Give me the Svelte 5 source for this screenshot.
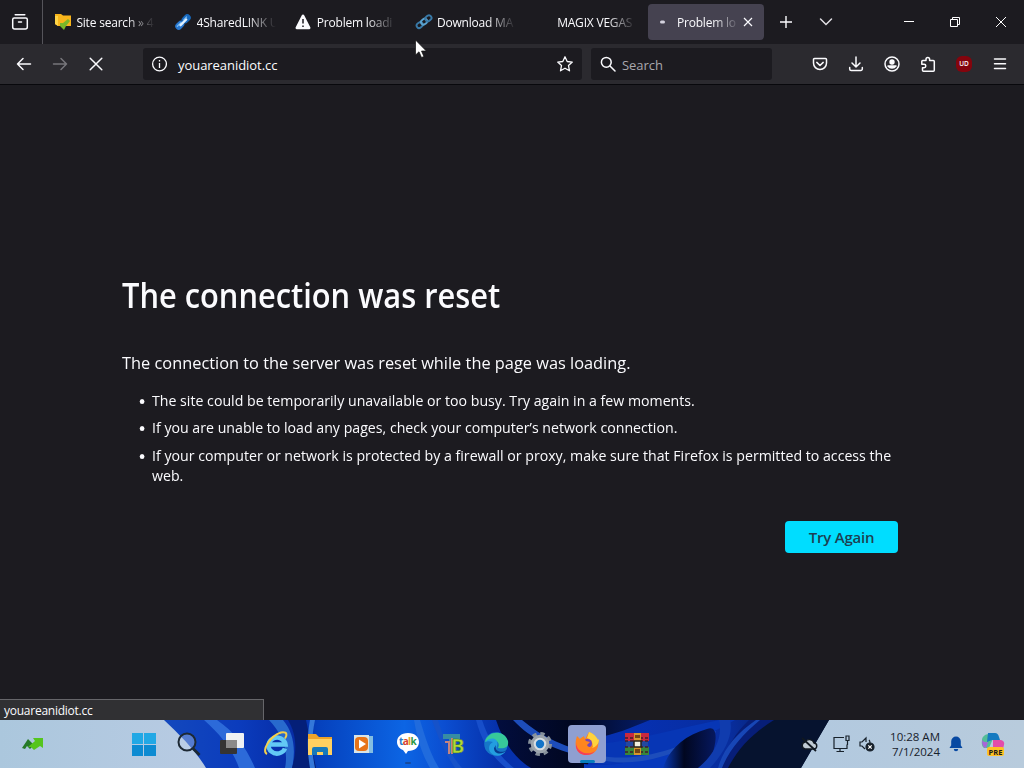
<script lang="ts">
	const tabs = [
		{ title: 'Site search » 4', icon: 'folder' },
		{ title: '4SharedLINK U', icon: 'link' },
		{ title: 'Problem loadi', icon: 'warning' },
		{ title: 'Download MA', icon: 'chain' },
		{ title: 'MAGIX VEGAS', icon: '' },
		{ title: 'Problem lo', icon: 'busy', active: true }
	];

	const apps = ['start', 'search', 'taskview', 'ie', 'explorer', 'media', 'talk', 'tb', 'edge', 'settings', 'firefox', 'winrar'];
</script>

<div class="screen">
	<div class="tabbar">
		<div class="recent">
			<svg width="18" height="18" viewBox="0 0 18 18" fill="none" stroke="#fbfbfe" stroke-width="1.5" stroke-linecap="round">
				<path d="M4.2 1.8h9.6M3.2 5h11.6a1.5 1.5 0 0 1 1.5 1.5V14a2 2 0 0 1-2 2H3.7a2 2 0 0 1-2-2V6.5A1.5 1.5 0 0 1 3.2 5zM7.5 9h3" />
			</svg>
		</div>
		<div class="tabs">
			{#each tabs as tab}
				<div class="tab" class:active={tab.active}>
					<svg class="favicon" width="18" height="18" viewBox="0 0 18 18">
						{#if tab.icon === 'folder'}
							<path d="M1 1h6l2 1.500h8V13H4l-3-2z" fill="#f8b51b" />
							<path d="M1 3h3v10l-3-2z" fill="#ffd447" />
							<path d="M6 10h3l5-4 2 2-4 5-2 4-4-4z" fill="#79b829" />
						{:else if tab.icon === 'link'}
							<g transform="rotate(-45 9 9)">
								<rect x="-.5" y="5.500" width="10" height="7" rx="3.500" fill="#2878d0" />
								<rect x="8.500" y="5.500" width="10" height="7" rx="3.500" fill="#1769bd" />
								<path d="M2 8h5M11 8h4" stroke="#75b8f2" stroke-width="1.300" stroke-linecap="round" />
								<path d="M5 9.500h8" stroke="#e0f1ff" stroke-width="2.400" stroke-linecap="round" />
							</g>
						{:else if tab.icon === 'warning'}
							<path d="M9 1.500a1.300 1.300 0 0 0-1.200.7L1.700 14.200a1.300 1.300 0 0 0 1.200 2h12.200a1.300 1.300 0 0 0 1.200-2L10.200 2.200A1.300 1.300 0 0 0 9 1.500z" fill="#fbfbfe" />
							<path d="M9 6v4.500M9 12.600v1.300" stroke="#1c1b22" stroke-width="1.500" />
						{:else if tab.icon === 'chain'}
							<g transform="rotate(-38 9 9)" fill="none" stroke="#397aa8" stroke-width="1.900">
								<rect x=".5" y="6.300" width="6.500" height="5" rx="2.500" />
								<rect x="6" y="6.300" width="6.500" height="5" rx="2.500" stroke="#5ba3cf" />
								<rect x="11.500" y="6.300" width="6.500" height="5" rx="2.500" />
							</g>
						{:else if tab.icon === 'busy'}
							<rect x="5" y="7.500" width="5" height="3" rx="1.500" fill="#d4d2de" />
						{/if}
					</svg>
					<span class="title">{tab.title}</span>
					{#if tab.active}
						<svg class="close" width="10" height="10" viewBox="0 0 10 10"><path d="M1 1l8 8M9 1L1 9" stroke="#fbfbfe" stroke-width="1.200" /></svg>
					{/if}
				</div>
			{/each}
		</div>
		<div class="tabtools">
			<svg width="14" height="14" viewBox="0 0 14 14"><path d="M7 1v12M1 7h12" stroke="#fbfbfe" stroke-width="1.400" /></svg>
			<svg width="14" height="14" viewBox="0 0 14 14" fill="none"><path d="M1.500 4L7 9.500 12.500 4" stroke="#e2e1e6" stroke-width="1.500" stroke-linecap="round" /></svg>
		</div>
		<div class="window-buttons">
			<svg width="12" height="12" viewBox="0 0 12 12"><path d="M1 5.500h10" stroke="#fff" /></svg>
			<svg width="12" height="12" viewBox="0 0 12 12" fill="none" stroke="#fff"><path d="M1.500 3.500h7v7h-7zM3.500 3.500v-2h7v7h-2" /></svg>
			<svg width="12" height="12" viewBox="0 0 12 12"><path d="M1 1l10 10M11 1L1 11" stroke="#fff" /></svg>
		</div>
	</div>

	<div class="toolbar">
		<div class="nav">
			<svg width="16" height="16" viewBox="0 0 16 16"><path d="M14.500 8H1.500M7 2.500L1.500 8 7 13.500" /></svg>
			<svg class="disabled" width="16" height="16" viewBox="0 0 16 16"><path d="M1.500 8h13M9 2.500L14.500 8 9 13.500" /></svg>
			<svg width="16" height="16" viewBox="0 0 16 16"><path d="M2.200 2.200l11.600 11.600M13.800 2.200L2.200 13.800" /></svg>
		</div>
		<div class="urlbar">
			<svg width="16" height="16" viewBox="0 0 16 16" fill="none" stroke="#fbfbfe" stroke-width="1.300"><circle cx="8.500" cy="8" r="6.900" /><path d="M8.500 7v5M8.500 4v1.500" /></svg>
			<span class="url">youareanidiot.cc</span>
			<svg width="18" height="18" viewBox="0 0 18 18" fill="none" stroke="#fbfbfe" stroke-width="1.300" stroke-linejoin="round"><path d="M9 1.800l2.200 4.700 5.100.6-3.800 3.500 1 5.200L9 13.200l-4.500 2.600 1-5.200-3.800-3.500 5.100-.6z" /></svg>
		</div>
		<div class="searchbar">
			<svg width="16" height="16" viewBox="0 0 16 16" fill="none" stroke="#fbfbfe" stroke-width="1.500" stroke-linecap="round"><circle cx="6.300" cy="6.300" r="4.900" /><path d="M10 10l5 5" /></svg>
			<span>Search</span>
		</div>
		<div class="actions">
			<svg width="16" height="16" viewBox="0 0 16 16"><path d="M2.500 2.500h11a1 1 0 0 1 1 1V7a6.500 6.500 0 0 1-13 0V3.500a1 1 0 0 1 1-1zM4.800 6.400L8 9.500l3.200-3.100" /></svg>
			<svg width="16" height="16" viewBox="0 0 16 16"><path d="M8 1v10M4 7l4 4 4-4M1.700 11.500V13a1.500 1.500 0 0 0 1.500 1.500h9.600a1.500 1.500 0 0 0 1.500-1.500v-1.500" /></svg>
			<svg width="16" height="16" viewBox="0 0 16 16"><circle cx="8" cy="8" r="7" /><circle cx="8" cy="6" r="2.700" fill="#fbfbfe" stroke="none" /><path d="M4 10h8a5 5 0 0 1-8 0z" fill="#fbfbfe" /></svg>
			<svg width="16" height="16" viewBox="0 0 16 16"><path d="M6 4.500V3.200a1.800 1.800 0 0 1 3.600 0v1.300h3.700a1 1 0 0 1 1 1v8.700a1 1 0 0 1-1 1H3.500a1 1 0 0 1-1-1v-2.500h1.600a1.700 1.700 0 0 0 0-3.400H1.800V5.500a1 1 0 0 1 1-1z" /></svg>
			<span class="ublock">UD</span>
			<svg width="16" height="16" viewBox="0 0 16 16"><path d="M2.500 3h11M2.500 7.800h11M2.500 12.500h11" /></svg>
		</div>
	</div>

	<main>
		<h1>The connection was reset</h1>
		<p>The connection to the server was reset while the page was loading.</p>
		<ul>
			<li>The site could be temporarily unavailable or too busy. Try again in a few moments.</li>
			<li>If you are unable to load any pages, check your computer’s network connection.</li>
			<li>If your computer or network is protected by a firewall or proxy, make sure that Firefox is permitted to access the<br />web.</li>
		</ul>
		<div class="button-row">
			<button>Try Again</button>
		</div>
	</main>

	<div class="status">youareanidiot.cc</div>

	<div class="taskbar">
		<svg class="wallpaper" width="1024" height="48" viewBox="0 0 1024 48">
			<defs>
				<linearGradient id="sky"><stop offset="0" stop-color="#abc7dd" /><stop offset=".2" stop-color="#b8cbe3" /><stop offset=".8" stop-color="#b2c9df" /><stop offset="1" stop-color="#b8cbdc" /></linearGradient>
				<linearGradient id="bloom" x1="165" x2="830" y1="0" y2="0" gradientUnits="userSpaceOnUse">
					<stop offset="0" stop-color="#1348bd" /><stop offset=".11" stop-color="#0b3cbd" /><stop offset=".2" stop-color="#062ba4" /><stop offset=".23" stop-color="#0541bd" /><stop offset=".36" stop-color="#0c65e4" /><stop offset=".42" stop-color="#0b4ed1" /><stop offset=".5" stop-color="#0631ab" /><stop offset=".7" stop-color="#0630b2" /><stop offset=".85" stop-color="#082d9d" /><stop offset="1" stop-color="#061535" />
				</linearGradient>
				<linearGradient id="shade"><stop offset="0" stop-color="#020d3e" /><stop offset=".5" stop-color="#010720" /><stop offset="1" stop-color="#051c68" /></linearGradient>
				<linearGradient id="fold"><stop offset="0" stop-color="#0838b4" /><stop offset=".4" stop-color="#010720" /><stop offset="1" stop-color="#06185e" /></linearGradient>
			</defs>
			<path d="M0 0h1024v48H0z" fill="url(#sky)" />
			<path d="M164 0h665l-28 48H206C196 31 180 15 164 0z" fill="url(#bloom)" />
			<path d="M204 0h13c19 13 30 29 38 48h-16C233 30 219 13 204 0z" fill="#2c6ad9" />
			<path d="M269 0h14c11 13 13 30 9 48h-7C289 28 281 13 269 0z" fill="#286acd" />
			<path d="M288 0h18l10 48h-24C297 31 297 15 288 0z" fill="#041f78" />
			<path d="M310 0h5c-4 18-3 33 0 48h-5c-3-18-3-32 0-48z" fill="#3478d9" />
			<path d="M414 0h6c6 20 11 35 19 48h-9C421 32 417 18 414 0z" fill="#206bdd" />
			<path d="M432 0h6c6 20 13 36 24 48h-7C445 33 438 18 432 0z" fill="#1652c9" />
			<path d="M476 0h6c7 21 17 36 32 48h-8C491 36 481 20 476 0z" fill="#174eca" />
			<path d="M496 0h154c-20 8-36 15-55 18l-8 30h-56C514 38 503 21 496 0z" fill="url(#shade)" />
			<path d="M598 24C638 20 680 8 719 0h16c-42 23-86 46-137 44z" fill="#0736b5" />
			<path d="M584 44c39 5 83-10 127-30 2 15-2 26-10 34h-117z" fill="#0739bd" />
			<path d="M513 0h9c20 17 44 28 75 35 40 9 81-7 119-24l-2 4c-52 27-88 32-117 24C554 32 530 18 513 0z" fill="#1d4dbb" />
			<path d="M663 48c6-19 22-33 44-39 11-5 12 13 0 39z" fill="url(#fold)" />
			<path d="M719 0h11c4 16-7 34-20 48h-12c17-14 25-31 21-48z" fill="#103cae" />
			<path d="M749 0h30c-17 15-31 29-39 48h-22c9-19 16-34 31-48z" fill="#071e78" />
			<path d="M774 0h55l-28 48h-73c10-20 25-35 46-48z" fill="#06132f" />
			<path d="M756 0h4c-17 14-31 30-38 48h-4c5-19 19-35 38-48z" fill="#1746b6" />
		</svg>
		<svg class="widget" width="24" height="18" viewBox="0 0 24 18">
			<path d="M2 13l6-9 6 6-4 4-3-3-2 3z" fill="#267a28" />
			<path d="M8 12l7-6-2-3h10v10l-3-2-6 4-3-3z" fill="#55c51d" />
		</svg>
		<div class="apps">
			{#each apps as app}
				<div class="app {app}">
					<svg width="28" height="28" viewBox="0 0 28 28">
						{#if app === 'start'}
							<path d="M2 3h11v11H2zM14 3h12v11H14z" fill="#22a8e5" /><path d="M2 15h11v11H2zM14 15h12v11H14z" fill="#0d8bd2" />
						{:else if app === 'search'}
							<circle cx="13" cy="12" r="8.500" fill="#bdd1ed" fill-opacity=".4" stroke="#1d2934" stroke-width="2" /><path d="M19 18.500l6.500 6.500" stroke="#1d2934" stroke-width="2.800" />
						{:else if app === 'taskview'}
							<rect x="2" y="10" width="17" height="14" rx="1" fill="#353433" /><rect x="8" y="3" width="18" height="15" rx="1" fill="#eef1f3" /><path d="M8 10h11v8H8z" fill="#8b8a89" />
						{:else if app === 'ie'}
							<path d="M23 18.500a8.500 8 0 1 1 .5-4H8" fill="none" stroke="#63c9f5" stroke-width="4.500" /><path d="M5 24C-1 21 8 6 19 2.500c7-1 6 3 4 6" fill="none" stroke="#f4cf4b" stroke-width="2" />
						{:else if app === 'explorer'}
							<path d="M2 4h8l3 3h13v18H2z" fill="#eda329" /><path d="M2 9h24v16H2z" fill="#ffd060" /><path d="M6 25v-6q0-2 2-2h12q2 0 2 2v6h-5v-3h-6v3z" fill="#1779bb" />
						{:else if app === 'media'}
							<path d="M6 6h17v17H6z" fill="#84bee2" /><path d="M4 5h15v18H4z" fill="#d9e4e7" /><rect x="5" y="7" width="13" height="14" rx="4" fill="#e77419" /><path d="M9 9.500l7 4.500-7 4.500z" fill="#fff" />
						{:else if app === 'talk'}
							<path d="M14 3C7 3 3 7 3 12c0 4 3 7 6 8l3 4 2-3c7 0 11-4 11-9s-4-9-11-9z" fill="#fff" /><text x="13.500" y="15" text-anchor="middle" font-size="10" font-weight="700" letter-spacing="-.7"><tspan fill="#247bcf">t</tspan><tspan fill="#d8402f">a</tspan><tspan fill="#e7a520">l</tspan><tspan fill="#299947">k</tspan></text>
						{:else if app === 'tb'}
							<path d="M5 4h17v5h-6v14h-5V9H5z" fill="#378ca3" /><path d="M7 12h4v12M14 24V8" stroke="#c58480" stroke-width="2" fill="none" /><text x="13" y="23" font-size="20" font-weight="700" fill="#b0d936" stroke="#34732e" stroke-width=".6">B</text>
						{:else if app === 'edge'}
							<circle cx="14" cy="14" r="11.800" fill="#1677c8" /><path d="M3 12C5 1 22-1 26 11c1 6-3 8-10 7 3-6-3-11-13-6z" fill="#37c99a" /><path d="M3 12c8-7 14-2 12 4-3 6 4 9 9 5-5 8-17 5-17-3 0-3 2-5 4-6-3-1-6-1-8 0z" fill="#239ee0" /><path d="M14 15c-2 6 5 9 11 5-4 5-13 5-13-2z" fill="#073b90" />
						{:else if app === 'settings'}
							<circle cx="14" cy="14" r="10" fill="none" stroke="#86909b" stroke-width="4" stroke-dasharray="4.200 3.654" /><circle cx="14" cy="14" r="7.800" fill="#d8dde1" stroke="#9ba4ac" stroke-width="3" /><circle cx="14" cy="14" r="4.200" fill="#1374c8" />
						{:else if app === 'firefox'}
							<path d="M4 6l3 3 4-3 1 3 4-7c5 2 7 5 8 8l1-1c2 9-3 16-11 16C5 25 0 18 4 6z" fill="#ff8420" /><path d="M16 2c4 1 8 5 9 8l1-1c0 5-3 8-7 9 2-5-1-9-5-10z" fill="#ffd33d" /><path d="M3 12c0 11 13 14 19 9-4 6-17 6-19-4z" fill="#f53d5c" /><circle cx="14.500" cy="13.500" r="4.500" fill="#7446ba" /><path d="M9 14c-3-3-2-6 1-7l3 4 4 1-3 3c1 3 5 2 6 0 0 6-9 7-11-1z" fill="#ff861d" />
						{:else}
							<path d="M2 3h24v8H2z" fill="#c9293f" /><path d="M3 11h22v6H3z" fill="#23489f" /><path d="M2 17h24v8H2z" fill="#38853b" /><path d="M2 8h24M2 11h24M2 17h24M2 22h24" stroke="#421d2c" stroke-width="1.500" stroke-dasharray="3 2" /><path d="M11 3h7v22h-7z" fill="#d7962d" /><path d="M12 5h5v3h-5zM12 19h5v4h-5z" fill="#744616" /><path d="M11 11h7v6h-7z" fill="#f2efde" stroke="#272018" stroke-width="1.500" />
						{/if}
					</svg>
				</div>
			{/each}
		</div>
		<div class="tray">
			<svg class="cloud" width="18" height="18" viewBox="0 0 18 18"><path d="M5 14h8.500a3 3 0 0 0 .5-6 5 5 0 0 0-9-1 3.600 3.600 0 0 0 0 7z" fill="#c0cbd4" stroke="#101820" stroke-width="1.400" /><path d="M2 3l14 13" stroke="#101820" stroke-width="1.800" /></svg>
			<svg width="18" height="18" viewBox="0 0 18 18" fill="none" stroke="#17212b" stroke-width="1.200"><path d="M12 2.500H2v11h13v-4M8 13.500v3M4.500 16.500H12M14 1h3v4.500h-3zM15.500 5.500V10" /></svg>
			<svg width="18" height="18" viewBox="0 0 18 18" fill="none" stroke="#17212b" stroke-width="1.200"><path d="M7 14L4 11H2V7h2l4-4v4M11 5q1 1 1 3" /><circle cx="12" cy="12" r="4" fill="#17212b" /><path d="M10.300 10.300l3.400 3.400M13.700 10.300l-3.400 3.400" stroke="#fff" /></svg>
			<div class="clock"><span>10:28 AM</span><span>7/1/2024</span></div>
			<svg class="bell" width="16" height="18" viewBox="0 0 16 18"><path d="M8 1.500a4.800 4.800 0 0 0-4.800 4.800v4L1.500 13h13l-1.700-2.700v-4A4.800 4.800 0 0 0 8 1.500zM5.800 14h4.400A2.200 2.200 0 0 1 5.800 14z" fill="#0749a2" /></svg>
			<svg class="copilot" width="26" height="26" viewBox="0 0 26 26">
				<path d="M2 9c0-3 3-6 7-6h6L9 17H4q-3-2-2-8z" fill="#53bd97" /><path d="M8 2h7q3 0 4 4l1 3h-8l-5 2z" fill="#167ac0" /><path d="M13 9h8q4 1 3 5l-2 7h-9z" fill="#e34da9" /><path d="M2 9q2 3 6 2l-2 6q-4 0-4-8z" fill="#a866d8" />
				<rect x="7" y="16" width="17" height="9" rx="2" fill="#ffc123" /><text x="15.500" y="23.500" text-anchor="middle" font-size="7.500" font-weight="700" fill="#191919">PRE</text>
			</svg>
		</div>
	</div>

	<svg class="cursor" width="14" height="20" viewBox="0 0 14 20"><path d="M1.500 1v15l3.500-3.200L7.500 18.500l2.400-1-2.400-5.500h4.800z" fill="#fff" stroke="#111" stroke-width=".7" /></svg>
</div>

<style>
	:global(body) {
		margin: 0;
		background: #1c1b20;
	}

	.screen {
		position: relative;
		display: flex;
		flex-direction: column;
		width: 1024px;
		height: 768px;
		overflow: hidden;
		color: #fbfbfe;
		background: #1c1b20;
		font-family: 'Open Sans', 'Noto Sans', sans-serif;
	}

	svg {
		display: block;
		flex: none;
	}

	.tabbar {
		display: flex;
		height: 44px;
		flex: none;
	}

	.recent {
		box-sizing: border-box;
		width: 43px;
		padding: 13px 0 0 11px;
		border-right: 1px solid #55545a;
	}

	.tabs {
		display: flex;
		padding-left: 2px;
	}

	.tab {
		box-sizing: border-box;
		display: flex;
		align-items: center;
		width: 116.2px;
		height: 36px;
		margin: 4px 2px;
		padding: 0 7px;
		border-radius: 4px;
	}

	.tab.active {
		background: #454250;
	}

	.title {
		width: 79px;
		margin-left: 4.4px;
		white-space: nowrap;
		font-size: 12px;
		letter-spacing: -0.2px;
		mask-image: linear-gradient(to right, #000 50px, transparent 79px);
	}

	.active .title {
		width: 61.6px;
		margin-left: 4px;
		mask-image: linear-gradient(to right, #000 36px, transparent 63px);
	}

	.close {
		margin-left: 4.4px;
	}

	.tabtools {
		display: flex;
		align-items: center;
		gap: 26px;
		margin-left: 13px;
	}

	.window-buttons {
		display: flex;
		align-items: center;
		gap: 34px;
		margin-left: auto;
		padding-right: 17px;
	}

	.toolbar {
		box-sizing: border-box;
		display: flex;
		align-items: center;
		height: 41px;
		flex: none;
		background: #2b2a2f;
		border-bottom: 1px solid #08080c;
	}

	.nav {
		display: flex;
		gap: 20px;
		width: 127px;
		padding-left: 16px;
	}

	.nav svg,
	.actions svg {
		fill: none;
		stroke: #fbfbfe;
		stroke-width: 1.5;
		stroke-linecap: round;
		stroke-linejoin: round;
	}

	.nav .disabled {
		stroke: #77767b;
	}

	.urlbar,
	.searchbar {
		box-sizing: border-box;
		display: flex;
		align-items: center;
		height: 32px;
		background: #1c1b20;
		border-radius: 3px;
		font-size: 13px;
	}

	.urlbar {
		width: 439px;
		padding: 0 8px;
	}

	.urlbar span,
	.searchbar span {
		padding-top: 1px;
		letter-spacing: -0.05px;
	}

	.url {
		flex: 1;
		margin-left: 11px;
	}

	.searchbar {
		width: 181px;
		margin-left: 9px;
		padding-left: 9px;
		gap: 6px;
		color: #a9a8ae;
	}

	.actions {
		display: flex;
		align-items: center;
		gap: 20px;
		margin-left: auto;
		padding-right: 16px;
	}

	.ublock {
		width: 16px;
		height: 16px;
		border-radius: 6px;
		background: #84040d;
		font-size: 6.5px;
		font-weight: 600;
		line-height: 15px;
		text-align: center;
	}

	main {
		width: 776px;
		flex: 1;
		padding: 186px 126px 0 122px;
	}

	h1,
	p,
	li {
		transform-origin: left;
		white-space: nowrap;
	}

	h1 {
		margin: 0;
		font-size: 34px;
		font-weight: 600;
		line-height: 48px;
		transform: scaleX(0.906);
	}

	p {
		margin: 31px 0 0;
		font-size: 17px;
		line-height: 26px;
		transform: scaleX(0.962);
	}

	ul {
		margin: 14px 0 0;
		padding-left: 30px;
		list-style: none;
		font-size: 15px;
		line-height: 20px;
	}

	li {
		position: relative;
		margin-bottom: 7.4px;
		transform: scaleX(0.944);
	}

	li::before {
		content: '';
		position: absolute;
		top: 9px;
		left: -13px;
		width: 5px;
		height: 5px;
		border-radius: 50%;
		background: #fbfbfe;
	}

	.button-row {
		display: flex;
		justify-content: flex-end;
		margin-top: 36px;
	}

	button {
		width: 113px;
		height: 32px;
		padding: 0;
		border: 0;
		border-radius: 4px;
		background: #00ddff;
		color: #1d3f52;
		font: 600 15px 'Open Sans', 'Noto Sans', sans-serif;
		letter-spacing: -0.2px;
	}

	.status {
		box-sizing: border-box;
		width: 264px;
		height: 21px;
		flex: none;
		padding-left: 4px;
		background: #303033;
		border: 1px solid #66666a;
		border-width: 1px 1px 0 0;
		font-size: 12px;
		line-height: 22px;
		letter-spacing: -0.25px;
	}

	.taskbar {
		position: relative;
		display: flex;
		align-items: center;
		height: 48px;
		flex: none;
	}

	.wallpaper {
		position: absolute;
		inset: 0;
	}

	.widget,
	.apps,
	.tray {
		position: relative;
	}

	.widget {
		margin-left: 20px;
	}

	.apps {
		display: flex;
		align-items: center;
		margin-left: 77.5px;
	}

	.app {
		display: grid;
		place-items: center;
		width: 44.1px;
		height: 38px;
	}

	.app.talk::after {
		content: '';
		position: absolute;
		bottom: -1px;
		width: 6px;
		height: 2px;
		border-radius: 1px;
		background: #164a9c;
	}

	.app.firefox {
		position: relative;
		width: 38px;
		margin: 0 6px 0 5.5px;
		border-radius: 4px;
		background: #8f9fd1;
	}

	.app.firefox::after {
		content: '';
		position: absolute;
		bottom: 0;
		left: 12px;
		width: 15px;
		height: 3px;
		border-radius: 2px;
		background: #087ebc;
	}

	.app.winrar {
		width: 50px;
	}

	.tray {
		display: flex;
		align-items: center;
		gap: 8px;
		margin-left: auto;
		padding-right: 18px;
		color: #17212b;
	}

	.cloud {
		margin-right: 6px;
	}

	.clock {
		display: flex;
		flex-direction: column;
		align-items: flex-end;
		box-sizing: border-box;
		width: 57px;
		padding-right: 1px;
		font-size: 11.5px;
		line-height: 15.5px;
		white-space: nowrap;
	}

	.bell {
		margin-left: -1px;
	}

	.copilot {
		margin-left: 8px;
	}

	.cursor {
		position: absolute;
		top: 39px;
		left: 414px;
	}
</style>
